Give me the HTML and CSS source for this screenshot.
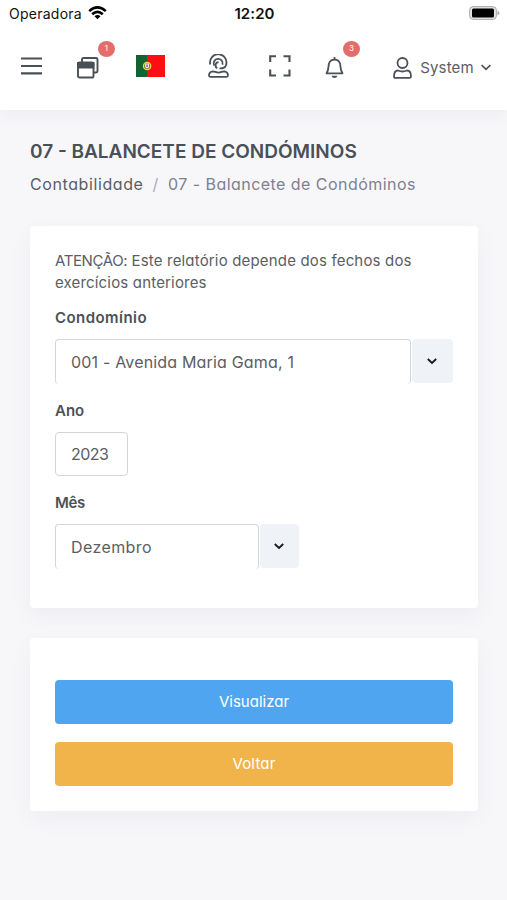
FILE: index.html
```html
<!DOCTYPE html>
<html lang="pt">
<head>
<meta charset="utf-8">
<meta name="viewport" content="width=device-width, initial-scale=1">
<title>07 - Balancete de Condóminos</title>
<link rel="stylesheet" href="styles.css">
</head>
<body>
<header class="topbar">
  <div class="status">
    <div class="carrier"><span>Operadora</span>
      <svg width="19" height="14" viewBox="0 0 19 14" fill="none" stroke="#000" stroke-width="2.6"><path d="M1.2 5.1Q9.500-2.300 17.800 5.100M4.200 8.300Q9.500 3.600 14.800 8.300"/><path d="M9.500 13.300L6.500 10.300Q9.500 7.900 12.500 10.300Z" fill="#000" stroke="none"/></svg>
    </div>
    <div class="clock">12:20</div>
    <svg class="battery" width="31" height="14" viewBox="0 0 31 14"><rect x=".6" y=".6" width="26.800" height="12.800" rx="3.500" fill="#e2e2e2" stroke="#aaa"/><rect x="3" y="2.500" width="22" height="9" rx="1.500"/><path d="M28.500 4.500Q30.500 5.500 30.500 7T28.500 9.500Z" fill="#aaa"/></svg>
  </div>
  <nav class="nav">
    <button class="item" aria-label="Menu"><svg width="21" height="18" viewBox="0 0 21 18" stroke="#495057" stroke-width="2.200"><path d="M0 1.500H21M0 9H21M0 16.400H21"/></svg></button>
    <button class="item windows" aria-label="Janelas"><svg width="22" height="22" viewBox="0 0 22 22" fill="none" stroke="#495057" stroke-width="1.900"><path d="M5 5V2.500Q5 1 6.500 1H19Q20.500 1 20.500 2.500V14Q20.500 15.500 19 15.500H17"/><rect x="1" y="5.500" width="15.500" height="15" rx="1.600"/><path d="M1 6H16.500V10.500H1Z" fill="#495057"/></svg><span class="badge">1</span></button>
    <button class="item flag" aria-label="Português"><svg width="29" height="22" viewBox="0 0 30 23" preserveAspectRatio="none"><path d="M0 0H30V23H0Z" fill="#fe0e12"/><path d="M0 0H11.500V23H0Z" fill="#12632f"/><circle cx="11.500" cy="11.500" r="4.500" fill="#f0d43c"/><circle cx="11.500" cy="11.500" r="3.200" fill="#71833a"/><path d="M9.500 9H13.500V12.500Q11.500 15 9.500 12.500Z" fill="#eee"/><path d="M10.700 10H12.300V12.500H10.700Z" fill="#6873a8"/></svg></button>
    <button class="item support" aria-label="Suporte"><svg width="21" height="24" viewBox="0 0 21 24" fill="none" stroke="#495057" stroke-width="1.800"><path d="M2.300 10.500A8.200 8.200 0 1 1 17.500 12.200Q16 14.700 11.500 14.300"/><path d="M6.200 11.500A4.500 4.500 0 1 1 14.400 10.800M9.200 14.200A3.200 3.200 0 0 1 10.600 8.200"/><path d="M5 17.300C7 17.300 8 18.700 10.500 18.700S14 17.300 16 17.300Q20 17.800 20 21.300Q20 22.800 18.500 22.800H2.500Q1 22.800 1 21.300Q1 17.800 5 17.300Z"/></svg></button>
    <button class="item expand" aria-label="Ecrã inteiro"><svg width="22" height="22" viewBox="0 0 22 22" fill="none" stroke="#495057" stroke-width="2.100"><path d="M1.200 7V1.200H7M14.500 1.200H20.500V7M20.500 14.500V20.500H14.500M7 20.500H1.200V14.500"/></svg></button>
    <button class="item bell" aria-label="Notificações"><svg width="20" height="22" viewBox="0 0 20 22" fill="none" stroke="#495057" stroke-width="1.800"><path d="M1.500 16.300C4 13 3.300 8.500 4 6.500C5 3.800 7 2.700 9.500 2.700S14 3.800 15 6.500C15.700 8.500 15 13 17.500 16.300Z" stroke-linejoin="round"/><path d="M9.500 0V3"/><path d="M6.500 18.800H12.500Q11.800 21 9.500 21T6.500 18.800Z" fill="#495057" stroke="none"/></svg><span class="badge">3</span></button>
    <button class="item user"><svg width="19" height="22" viewBox="0 0 19 22" fill="none" stroke="#495057" stroke-width="1.800"><circle cx="9.500" cy="6" r="5"/><path d="M1 19.500C1 15.500 3 13.500 5 13.500Q9.500 15.500 14 13.500C16 13.500 18 15.500 18 19.500Q18 20.900 16.500 20.900H2.500Q1 20.900 1 19.500Z"/></svg><span class="username">System</span><svg class="caret" width="10" height="7" viewBox="0 0 10 7" fill="none" stroke="#495057" stroke-width="1.700"><path d="M.6 1L5 5.400L9.400 1"/></svg></button>
  </nav>
</header>
<main>
  <h1><span>07 - BALANCETE DE CONDÓMINOS</span></h1>
  <div class="crumbs"><a>Contabilidade</a><i>/</i><span>07 - Balancete de Condóminos</span></div>
  <section class="card form">
    <p><span class="warn">ATENÇÃO:</span> Este relatório depende dos fechos dos<br><span class="second">exercícios anteriores</span></p>
    <label class="lab-condo">Condomínio</label>
    <div class="combo"><div class="field open"><span class="val-condo">001 - Avenida Maria Gama, 1</span></div><button class="drop" aria-label="Abrir"><svg width="10" height="7" viewBox="0 0 10 7" fill="none" stroke="#15191e" stroke-width="1.800"><path d="M.8 1L5 5L9.200 1"/></svg></button></div>
    <label class="lab-year">Ano</label>
    <div class="field year"><span>2023</span></div>
    <label class="lab-month">Mês</label>
    <div class="combo month"><div class="field open"><span class="val-month">Dezembro</span></div><button class="drop" aria-label="Abrir"><svg width="10" height="7" viewBox="0 0 10 7" fill="none" stroke="#15191e" stroke-width="1.800"><path d="M.8 1L5 5L9.200 1"/></svg></button></div>
  </section>
  <section class="card actions">
    <button class="btn view"><span>Visualizar</span></button>
    <button class="btn back"><span>Voltar</span></button>
  </section>
</main>
</body>
</html>
```
FILE: styles.css
```css
* { box-sizing: border-box; }
body { margin: 0; min-height: 900px; background: #f7f7fa; color: #5a5e63; font-family: Inter, "Liberation Sans", sans-serif; font-feature-settings: "cv11"; white-space: nowrap; }
button { font: inherit; font-feature-settings: inherit; color: inherit; border: 0; padding: 0; background: none; }
svg { display: block; flex: none; }
.topbar { height: 110px; background: #fff; box-shadow: 0 3px 20px rgba(30, 32, 80, .05); }
.status { height: 28px; display: grid; grid-template-columns: 1fr auto 1fr; padding: 0 7px 0 9px; align-items: center; color: #111; font-feature-settings: normal; }
.carrier { display: flex; gap: 6px; align-items: center; font-size: 14px; letter-spacing: .25px; margin-top: -1px; }
.carrier svg { margin-top: -1px; }
.clock { font-size: 15px; font-weight: 600; letter-spacing: .1px; margin-top: -1px; }
.battery { justify-self: end; margin-top: -2px; }
.nav { height: 76px; display: flex; align-items: center; padding-left: 21px; }
.item { position: relative; display: flex; align-items: center; }
.windows { margin: 3px 0 0 35px; }
.flag { margin: -1px 0 0 37px; }
.support { margin-left: 43px; }
.expand { margin-left: 40px; }
.bell { margin: 4px 0 0 34px; }
.user { margin: 4px 0 0 48px; }
.username { font-size: 15px; width: 54px; margin: -1px 0 0 8px; letter-spacing: .15px; }
.caret { margin: -1px 0 0 7px; }
.badge { position: absolute; left: 21px; top: -16px; width: 17px; height: 16px; border-radius: 50%; background: #e26d6b; color: #fff; font-size: 8px; line-height: 15px; text-align: center; }
.bell .badge { left: 18px; }
main { padding: 29px 30px 0; }
h1 { margin: 0; height: 25px; font-size: 19px; line-height: 26px; font-weight: 600; color: #495057; }
.crumbs { display: flex; height: 24px; margin-top: 8px; font-size: 16px; line-height: 25px; }
.crumbs a { width: 113px; letter-spacing: .6px; }
.crumbs i { width: 25px; text-align: center; font-style: normal; color: #a9abb4; }
.crumbs span { color: #7e8190; letter-spacing: .46px; }
.card { width: 448px; background: #fff; border-radius: 4px; box-shadow: 0 8px 24px rgba(30, 32, 80, .045); padding: 0 25px; }
.form { height: 382px; margin-top: 30px; padding-top: 24px; }
p { margin: 0; font-size: 15px; line-height: 22px; letter-spacing: .17px; }
.warn { letter-spacing: -.4px; }
label { display: block; height: 22px; font-size: 15px; line-height: 23px; font-weight: 600; color: #4c5157; }
.lab-condo { margin: 12px 0 11px; letter-spacing: .45px; }
.lab-year { margin: 15px 0 11px; }
.lab-month { margin: 15px 0 11px; letter-spacing: -.3px; }
.field { height: 44px; border: 1px solid #d0d6da; border-radius: 4px; font-size: 16px; line-height: 43px; padding-left: 15px; }
.field.open { border-bottom: 0; width: 356px; height: 45px; line-height: 45px; }
.val-condo { letter-spacing: .18px; }
.val-month { letter-spacing: .4px; }
.year { width: 73px; letter-spacing: -.5px; }
.combo { display: flex; gap: 1px; height: 45px; }
.drop { width: 41px; height: 44px; border-radius: 4px; background: #eff2f7; display: grid; place-items: center; }
.drop svg { margin-left: -2px; }
.month .field { width: 204px; }
.month .drop { width: 39px; }
.actions { height: 173px; margin-top: 30px; padding-top: 42px; }
.btn { display: block; width: 398px; height: 44px; border-radius: 4px; color: #fff; font-size: 15px; line-height: 42px; }
.view { background: #50a5f1; }
.back { background: #f0b44b; margin-top: 18px; letter-spacing: .2px; }
```
